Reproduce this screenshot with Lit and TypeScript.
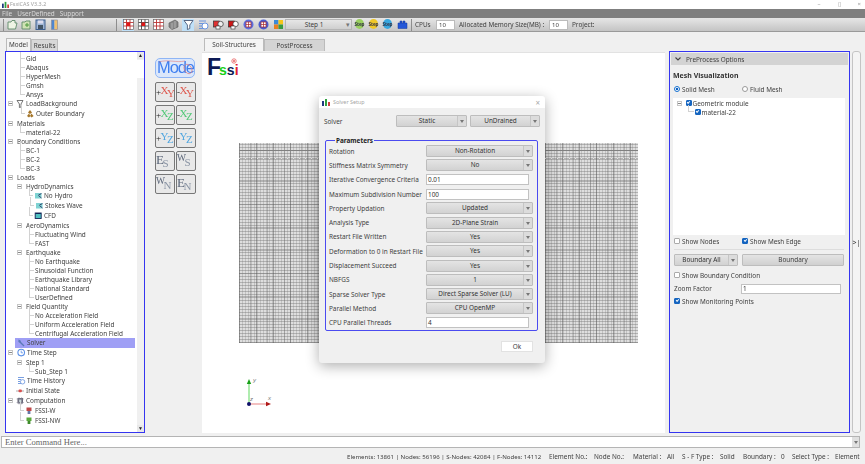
import { LitElement, html, css, svg } from "lit";
import { customElement } from "lit/decorators.js";

type Row = { t: string; x: number; h?: number; ic?: string; exp?: number; stub?: boolean; sel?: boolean };
const R = (t: string, x: number, o: Partial<Row> = {}): Row => ({ t, x, stub: true, ...o });

const treeRows: Row[] = [
  R("Gid", 26), R("Abaqus", 26), R("HyperMesh", 26), R("Gmsh", 26), R("Ansys", 26),
  R("LoadBackground", 26, { h: 10, ic: "funnel", exp: 11, stub: false }),
  R("Outer Boundary", 36, { h: 10, ic: "boundary" }),
  R("Materials", 17, { exp: 11, stub: false }), R("material-22", 26),
  R("Boundary Conditions", 17, { exp: 11, stub: false }), R("BC-1", 26), R("BC-2", 26), R("BC-3", 26),
  R("Loads", 17, { exp: 11, stub: false }),
  R("HydroDynamics", 26, { exp: 20, stub: false }),
  R("No Hydro", 44, { h: 10, ic: "wave" }), R("Stokes Wave", 45, { h: 10, ic: "wave" }), R("CFD", 44, { h: 10, ic: "cfd" }),
  R("AeroDynamics", 26, { exp: 20, stub: false }), R("Fluctuating Wind", 35), R("FAST", 35),
  R("Earthquake", 26, { exp: 20, stub: false }), R("No Earthquake", 35), R("Sinusoidal Function", 35),
  R("Earthquake Library", 35), R("National Standard", 35), R("UserDefined", 35),
  R("Field Quantity", 26, { exp: 20, stub: false }), R("No Acceleration Field", 35),
  R("Uniform Acceleration Field", 35), R("Centrifugal Acceleration Field", 35),
  R("Solver", 27, { h: 10, ic: "wrench", sel: true, stub: false }),
  R("Time Step", 27, { h: 10, ic: "clock", exp: 11, stub: false }),
  R("Step 1", 26, { exp: 20, stub: false }), R("Sub_Step 1", 35),
  R("Time History", 27, { h: 10, ic: "history", stub: false }),
  R("Initial State", 26, { h: 10, ic: "state", stub: false }),
  R("Computation", 26, { h: 10, ic: "chip", exp: 11, stub: false }),
  R("FSSI-W", 35, { h: 10, ic: "fssiw" }), R("FSSI-NW", 35, { h: 10, ic: "fssinw" }),
];

const icons: Record<string, ReturnType<typeof svg>> = {
  funnel: svg`<path d="M1 1.5H7L5 5V8L3.4 8.6V5Z" fill="#fff" stroke="#555" stroke-width=".8"/>`,
  boundary: svg`<path d="M4 1 6 3.5 4 5 2 3.5ZM1 7 3 4.5 4.4 7 3 8.6ZM7.6 7 5.4 4.5 4 7 5.6 8.6Z" fill="#a5762a"/>`,
  wave: svg`<rect x="1" y="2" width="6.5" height="5.5" fill="#7fd3d3"/><path d="M4.5 4 7.5 2.6M4.5 4.6 7.5 7" stroke="#225" stroke-width=".8"/>`,
  cfd: svg`<rect x="1.2" y="2" width="6" height="5.5" fill="#4fc0c0" stroke="#125" stroke-width=".9"/><rect x="1.5" y="2" width="5.4" height="1" fill="#125"/>`,
  wrench: svg`<path d="M1.5 1.5 3.5 2.5 4 4 7.5 7.6 6.6 8.4 3 5 1.4 4Z" fill="#5a7ab8"/>`,
  clock: svg`<circle cx="4.2" cy="4.6" r="3.3" fill="#fff" stroke="#5a8fe8" stroke-width="1.1"/><path d="M4.2 2.6V4.8H6" fill="none" stroke="#5a8fe8" stroke-width=".8"/>`,
  history: svg`<path d="M1 1.5H7M1 3.5H4M1 5.5H3M1 7.5H4" stroke="#6a94de" stroke-width=".9"/><circle cx="5.6" cy="5.8" r="2.2" fill="#fff" stroke="#6a94de" stroke-width=".8"/>`,
  state: svg`<path d="M0 5H8" stroke="#999" stroke-width=".8"/><rect x="2.5" y="3.6" width="3.4" height="2.6" rx="1" fill="#d95050"/>`,
  chip: svg`<rect x="1.5" y="2" width="5.5" height="5.5" fill="#667" /><rect x="3" y="3.5" width="2.5" height="2.5" fill="#cdd"/><path d="M.5 3H8M.5 6.5H8M3 1V8.5M5.6 1V8.5" stroke="#889" stroke-width=".5"/>`,
  fssiw: svg`<rect x="1.5" y="1.5" width="5" height="3.5" fill="#c04848"/><rect x="2.6" y="5" width="2.8" height="3" fill="#6678a8"/>`,
  fssinw: svg`<rect x="1.5" y="1.5" width="5" height="3.5" fill="#5aa83c"/><rect x="2.6" y="5" width="2.8" height="3" fill="#3f8a2c"/>`,
};

const grid = (red: boolean, w = "#b33") => svg`<rect x=".5" y=".5" width="10" height="10" fill="#fff" stroke="#666" stroke-width=".7"/>
  <path d="M3.5 .5V10.500M7 .5V10.500M.5 3.500H10.500M.5 7H10.500" stroke="${w}" stroke-width=".9"/>
  ${red ? svg`<rect x="3.5" y="3.5" width="3.5" height="3.5" fill="#e01818"/>` : ""}`;
const bubble = (c1: string, c2: string) => svg`<rect x=".5" y="2" width="6" height="6" fill="${c1}" stroke="#333" stroke-width=".7"/><circle cx="7.6" cy="5" r="2.7" fill="${c2}" stroke="#333" stroke-width=".7"/><rect x="3" y="7" width="4" height="3" fill="#fff" stroke="#333" stroke-width=".6"/>`;
const ball = (c: string) => svg`<circle cx="5.5" cy="5.5" r="5" fill="${c}"/><rect x="3" y="3" width="5" height="5" fill="#fff" stroke="#a22" stroke-width=".7"/><path d="M5.5 3V8M3 5.5H8" stroke="#a22" stroke-width=".7"/>`;

const leftTools = [
  svg`<path d="M1 3H4L5 1.5H8V4H10L8.5 10H1Z" fill="#eef4e4" stroke="#5f8a6a" stroke-width=".9"/>`,
  svg`<path d="M1 3H4L5 2H9V10H1Z" fill="#cfe3b4" stroke="#5f8a6a" stroke-width=".9"/><path d="M6 4V8M4 6H8" stroke="#4d9a3c"/>`,
  svg`<rect x="1" y="1" width="9" height="9.5" fill="#9fb5d6" stroke="#3e5f8e"/><rect x="3" y="1.5" width="5" height="3" fill="#dde"/><rect x="3" y="6" width="5" height="4" fill="#456"/>`,
  svg`<rect x="2.5" y="1" width="3" height="9.5" fill="#4f86cf"/><rect x="5.5" y="1" width="3" height="9.5" fill="#f0c070"/><rect x="2.5" y="1" width="6" height="9.5" fill="none" stroke="#889" stroke-width=".6"/>`,
];

const stepIcon = (c: string) => html`<span class="step"><span class="disc" style="background:${c}"></span><span class="stx">Step</span></span>`;

const dlgRows: [string, string, boolean][] = [
  ["Rotation", "Non-Rotation", true],
  ["Stiffness Matrix Symmetry", "No", true],
  ["Iterative Convergence Criteria", "0.01", false],
  ["Maximum Subdivision Number", "100", false],
  ["Property Updation", "Updated", true],
  ["Analysis Type", "2D-Plane Strain", true],
  ["Restart File Written", "Yes", true],
  ["Deformation to 0 in Restart File", "Yes", true],
  ["Displacement Succeed", "Yes", true],
  ["NBFGS", "1", true],
  ["Sparse Solver Type", "Direct Sparse Solver (LU)", true],
  ["Parallel Method", "CPU OpenMP", true],
  ["CPU Parallel Threads", "4", false],
];

const views: [string, string, string, string][] = [
  ["+", "X", "Y", "xr"], ["-", "X", "Y", "xr"],
  ["+", "X", "Z", "xg"], ["-", "X", "Z", "xg"],
  ["+", "Y", "Z", "xb"], ["-", "Y", "Z", "xb"],
  ["", "E", "S", "xs"], ["", "W", "S", "xs w"],
  ["", "W", "N", "xs w"], ["", "E", "N", "xs"],
];

@customElement("app-root")
export class AppRoot extends LitElement {
  static styles = css`
    :host { display: block; width: 865px; height: 464px; overflow: hidden; background: #f0f0f0;
      font-family: "Noto Sans", "Open Sans", sans-serif; font-size: 6.4px; color: #404040; }
    * { box-sizing: border-box; }
    .app { width: 865px; height: 464px; display: flex; flex-direction: column; position: relative; filter: blur(0.38px); }
    .title { height: 9px; background: #fff; display: flex; align-items: center; padding: 0 0 0 2px; gap: 1px; color: #a0a0a0; font-size: 5.4px; line-height: 9px; flex: none; }
    .title .ctl { margin-left: auto; display: flex; gap: 17px; padding-right: 4px; color: #9a9a9a; font-size: 6px; }
    .menu { height: 9px; background: #7f7f7f; color: #d9d9d9; display: flex; gap: 5px; padding-left: 2px; line-height: 9px; flex: none; font-size: 6.4px; }
    .bar { height: 14px; flex: none; background: linear-gradient(#e6e6e6, #c4c4c4); border-bottom: 1px solid #9a9a9a; display: flex; align-items: center; position: relative; font-size: 6.4px; white-space: nowrap; }
    .bar svg { width: 11px; height: 11px; flex: none; display: block; }
    .grip { width: 1px; height: 12px; background: #8d8d8d; flex: none; }
    .ti { width: 12px; height: 12px; padding: .5px; flex: none; }
    .ti.on { background: #bfe0f8; }
    .leftt { display: flex; gap: 2px; margin-left: 2px; margin-right: 56px; }
    .grp { display: flex; gap: 3px; }
    .combo-step { width: 67px; height: 11px; background: linear-gradient(#e6e6e6,#cfcfcf); border: 1px solid #b5b5b5; text-align: center; line-height: 9px; position: relative; padding-right: 9px; margin-left: 1px; }
    .combo-step::after { content: "▾"; position: absolute; right: 1px; top: 0; color: #777; font-size: 7px; }
    .step { width: 11px; height: 10px; position: relative; flex: none; display: block; }
    .disc { position: absolute; inset: 0 1px; border-radius: 50%; display: block; }
    .stx { position: absolute; left: 0; right: 0; top: 0; font-size: 4.6px; font-weight: 700; line-height: 10px; text-align: center; color: #334; letter-spacing: -.1px; }
    .binp { height: 10px; width: 19px; background: #fff; border: 1px solid #bbb; line-height: 8px; padding-left: 2px; font-size: 6px; flex: none; }

    .main { flex: 1; min-height: 0; display: flex; }

    .left { width: 150px; flex: none; display: flex; flex-direction: column; padding: 6px 0 0 5px; }
    .tabs { display: flex; height: 13px; flex: none; padding-left: 1px; }
    .tab { background: #d8d8d8; border: 1px solid #bbb; border-bottom: 0; padding: 0 2px; line-height: 11px; height: 12px; margin-top: 1px; }
    .tab.on { background: #f4f4f4; height: 13px; margin-top: 0; }
    .tree { width: 140px; height: 382px; border: 1.5px solid #3535f0; background: #fff; position: relative; padding-top: 2px; overflow: hidden; }
    .row { position: relative; line-height: 9px; white-space: nowrap; }
    .row .stub { position: absolute; top: -4px; height: 8.5px; width: 5px; border-left: 1px solid #d2d2d2; border-bottom: 1px solid #d2d2d2; }
    .row .lab { position: absolute; top: 0; line-height: inherit; }
    .row.sel::before { content: ""; position: absolute; left: 9px; width: 120px; top: 0; bottom: 0; background: #9f9ff5; }
    .row svg { position: absolute; top: 0; width: 9px; height: 9px; }
    .row .ex { position: absolute; top: 2px; width: 5px; height: 5px; border: 1px solid #c6c6c6; background: #fff; }
    .row .ex::after { content: ""; position: absolute; left: 0; right: 0; top: 1px; height: 1px; background: #888; }
    .sb { position: absolute; right: 0; top: 0; bottom: 0; width: 7px; background: #f0f0f0; }
    .sb .th { position: absolute; left: 0; right: 0; top: 8px; height: 18px; background: #fff; }
    .sb .up, .sb .dn { position: absolute; left: 0; right: 0; height: 7px; background: #e8e8e8; color: #222; font-size: 5px; line-height: 7px; text-align: center; }
    .sb .up { top: 0; } .sb .dn { bottom: 0; }

    .center { flex: 1; min-width: 0; display: flex; flex-direction: column; padding-top: 6px; }
    .ctabs { display: flex; height: 14px; padding-left: 54px; flex: none; }
    .ctab { width: 61px; text-align: center; line-height: 11px; height: 12px; margin-top: 1px; background: #d4d4d4; border: 1px solid #bbb; border-bottom: 0; }
    .ctab.on { background: #f4f4f4; height: 13px; margin-top: 0; width: 60px; }
    .cbody { flex: 1; display: flex; min-height: 0; }
    .vt { width: 52px; flex: none; padding: 6px 0 0 5px; display: flex; flex-direction: column; gap: 4px; }
    .mode { width: 40px; height: 20px; border: 1.5px solid #8fb5f5; border-radius: 5px; background: #dbe7fb; color: #3f7ff0; font-size: 16.5px; line-height: 17px; text-align: left; padding-left: 1px; font-family: "Liberation Sans", sans-serif; letter-spacing: -1.1px; overflow: hidden; position: relative; }
    .mode svg { position: absolute; left: 0; top: 0; width: 37px; height: 17px; }
    .vg { display: grid; grid-template-columns: 20px 20px; grid-auto-rows: 20px; gap: 3px 1px; }
    .vb { border: 1.2px solid #777; border-radius: 2px; background: #e8e8e8; font-family: "Liberation Serif", serif; font-size: 9px; line-height: 17px; white-space: nowrap; overflow: hidden; color: #222; letter-spacing: -.5px; position: relative; padding-left: 0; }
    .vb i, .vb b { font-style: normal; font-weight: 400; display: inline-block; }
    .vb i { font-size: 11px; transform: translateY(-1.5px); }
    .vb b { font-size: 11px; transform: translateY(2px); margin-left: -1px; }
    .xr i, .xr b { color: #de5a50; } .xg i, .xg b { color: #52c878; } .xb i, .xb b { color: #50a6e0; }
    .xs i { color: #5a6578; font-size: 13px; } .xs b { color: #8a94a4; }
    .xs.w i { font-size: 9.500px; transform: translateY(-3px); }
    .canvas { flex: 1; background: #fff; position: relative; border-top: 1px solid #e2e2e2; }
    .logo { position: absolute; left: 5px; top: 3px; font-family: "Liberation Sans", sans-serif; font-weight: 700; line-height: 22px; white-space: nowrap; }
    .logo .f { font-size: 23px; color: #0c1a55; letter-spacing: -2px; }
    .logo .s1 { font-size: 14px; color: #18d018; } .logo .s2 { font-size: 14px; color: #0c1a55; } .logo .i { font-size: 14px; color: #e02030; }
    .logo svg { position: absolute; left: 24px; top: 2px; width: 6px; height: 6px; }
    .mesh { position: absolute; left: 37px; top: 90px; width: 399px; height: 200px;
      background-color: #dedede;
      background-image:
        repeating-linear-gradient(90deg, rgba(255,255,255,.7) 0 1px, transparent 1px 6px),
        linear-gradient(#808080, #808080),
        repeating-linear-gradient(90deg, rgba(80,80,80,.45) 0 1px, transparent 1px 11px, rgba(90,90,90,.3) 11px 12px, transparent 12px 17px),
        repeating-linear-gradient(90deg, rgba(120,120,120,.28) 0 1px, transparent 1px 3px),
        repeating-linear-gradient(0deg, rgba(100,100,100,.36) 0 1px, transparent 1px 3px),
        repeating-linear-gradient(0deg, rgba(70,70,70,.28) 0 1px, transparent 1px 23px);
      background-size: 100% 1px, 100% 1px, auto, auto, auto, auto;
      background-position: 0 15px, 0 7px, 0 0, 0 0, 0 0, 0 0;
      background-repeat: no-repeat, no-repeat, repeat, repeat, repeat, repeat;
    }
    .axes { position: absolute; left: 41px; top: 322px; width: 32px; height: 32px; overflow: visible; }

    .dlg { position: absolute; left: 319px; top: 96px; width: 226px; height: 267px; background: #f0f0f0; border-radius: 3px; box-shadow: 0 3px 14px rgba(0,0,0,.32); display: flex; flex-direction: column; }
    .dt { height: 12px; background: #fff; border-radius: 3px 3px 0 0; display: flex; align-items: center; padding: 0 5px 0 3px; color: #a5a5a5; font-size: 5.4px; flex: none; gap: 3px; }
    .dt .x { margin-left: auto; color: #aaa; font-size: 8px; }
    .dt svg { width: 8px; height: 8px; }
    .dsolver { display: flex; align-items: center; height: 12px; margin-top: 7px; padding-left: 5px; flex: none; }
    .dsolver .l { width: 72px; }
    .cb { height: 12px; background: linear-gradient(#e4e4e4,#d2d2d2); border: 1px solid #bdbdbd; border-radius: 1px; text-align: center; line-height: 10px; padding-right: 9px; position: relative; flex: none; color: #333; }
    .cb::after { content: ""; position: absolute; right: 0; top: 0; bottom: 0; width: 8px; border-left: 1px solid #c6c6c6; background: #dcdcdc; }
    .cb::before { content: ""; position: absolute; z-index: 1; right: 2px; top: 4px; border: 2px solid transparent; border-top: 3px solid #777; border-bottom: 0; }
    .group { margin: 13px 0 0 6px; width: 213px; height: 191px; border: 1px solid #4b4bf0; border-radius: 2px; position: relative; padding: 3px 0 0 3px; flex: none; }
    .gt { position: absolute; left: 9px; top: -5px; background: #f0f0f0; font-weight: 700; padding: 0 1px; line-height: 9px; color: #222; }
    .drow { height: 14.3px; display: flex; align-items: center; }
    .drow .l { width: 97px; flex: none; white-space: nowrap; }
    .inp { width: 103px; height: 11px; background: #fff; border: 1px solid #c2c2c2; line-height: 9px; padding-left: 1px; color: #333; }
    .ok { align-self: flex-end; margin: 10px 12px 0 0; width: 32px; height: 11px; background: #fff; border: 1px solid #e2e2e2; text-align: center; line-height: 9px; }

    .right { width: 200px; flex: none; display: flex; gap: 2px; padding-top: 19px; padding-left: 4px; }
    .panel { width: 181px; height: 382px; border: 1.5px solid #3535f0; padding: 1px; display: flex; flex-direction: column; flex: none; }
    .ph { height: 12px; background: #d3d3d3; display: flex; align-items: center; gap: 5px; padding-left: 4px; flex: none; }
    .ph svg { width: 6px; height: 6px; }
    .pb { padding: 0 1px 0 1px; display: flex; flex-direction: column; flex: 1; }
    .h { font-weight: 700; font-size: 7px; margin: 5px 0 0 1px; line-height: 11px; color: #333; }
    .radios { display: flex; margin: 3.5px 0 0 2px; height: 9px; align-items: center; }
    .rd { display: flex; align-items: center; gap: 2px; }
    .rd i { width: 6px; height: 6px; border-radius: 50%; border: 1px solid #999; background: #fff; display: block; flex: none; }
    .rd.on i { border: 1.5px solid #1470d0; background: radial-gradient(#0d5fc0 0 1.2px, #fff 1.6px); }
    .ptree { height: 137px; background: #fff; margin: 4px 2px 0 1px; position: relative; padding-top: 1px; }
    .ptr { height: 9px; display: flex; align-items: center; gap: 1px; line-height: 9px; position: relative; }
    .pex { position: absolute; left: 4px; top: 2px; width: 5px; height: 5px; border: 1px solid #c6c6c6; background: #fff; }
    .pex::after { content: ""; position: absolute; left: 0; right: 0; top: 1px; height: 1px; background: #888; }
    .pst { position: absolute; left: 15px; top: -3px; width: 6px; height: 7px; border-left: 1px solid #d2d2d2; border-bottom: 1px solid #d2d2d2; }
    .chk { width: 6px; height: 6px; border: 1px solid #aaa; background: #fff; display: block; flex: none; border-radius: 1px; }
    .chk.on { background: #1565c0; border-color: #1565c0; position: relative; }
    .chk.on::after { content: ""; position: absolute; left: .8px; top: .2px; width: 2.2px; height: 1.2px; border-left: .7px solid #fff; border-bottom: .7px solid #fff; transform: rotate(-45deg); }
    .ckr { display: flex; align-items: center; gap: 2px; height: 9px; white-space: nowrap; }
    .two { display: flex; margin: 2px 0 0 2px; }
    .sep { height: 1px; background: #ddd; margin: 3px 3px 0 2px; flex: none; }
    .bnd { display: flex; gap: 4px; margin: 4px 0 0 2px; }
    .btn { width: 102px; height: 12px; background: linear-gradient(#e4e4e4,#d0d0d0); border: 1px solid #bdbdbd; border-radius: 1px; text-align: center; line-height: 10px; }
    .zoomr { display: flex; align-items: center; margin: 3px 0 0 2px; height: 12px; }
    .zoomr .l { width: 67px; }
    .zoomr .inp { width: 100px; height: 10px; line-height: 8px; }
    .strip { width: 9px; height: 382px; border: 1px solid #c4c4c4; border-radius: 3px; background: #f4f4f4; flex: none; display: flex; align-items: center; justify-content: center; font-size: 7px; color: #333; white-space: nowrap; }

    .cmd { height: 12px; margin: 3px 5px 0 1px; background: #fff; border: 1px solid #b4b4b4; font-family: "Liberation Serif", serif; font-size: 8.6px; line-height: 10px; padding-left: 3px; color: #666; position: relative; flex: none; width: 859px; }
    .cmd span { position: absolute; right: 0; top: 0; bottom: 0; width: 7px; background: #e0e0e0; }
    .cmd span::after { content: ""; position: absolute; left: 2px; top: 4px; border: 2px solid transparent; border-top: 3px solid #777; border-bottom: 0; }
    .status { height: 16px; flex: none; display: flex; align-items: center; padding-left: 347px; font-size: 6.4px; white-space: nowrap; }
    .status span { display: block; flex: none; }
    .status .tot { width: 202px; font-size: 6.1px; }
  `;

  private tree() {
    return treeRows.map((r) => {
      const h = r.h ?? 9;
      return html`<div class="row ${r.sel ? "sel" : ""}" style="height:${h}px">
        ${r.exp ? html`<span class="ex" style="left:${r.exp - 9}px"></span>` : ""}
        ${r.stub ? html`<span class="stub" style="left:${(r.ic ? r.x - 9 : r.x) - 12}px;width:${r.ic ? 4 : 5}px"></span>` : ""}
        ${r.ic ? html`<svg viewBox="0 0 9 9" style="left:${r.x - 16}px">${icons[r.ic]}</svg>` : ""}
        <span class="lab" style="left:${r.x - 6}px">${r.t}</span>
      </div>`;
    });
  }

  render() {
    const t = (s: ReturnType<typeof svg>, on = false) =>
      html`<span class="ti ${on ? "on" : ""}"><svg viewBox="0 0 11 11">${s}</svg></span>`;
    return html`<div class="app">
      <div class="title">
        <svg viewBox="0 0 8 8" width="7" height="7"><rect x="0" y="3" width="2" height="5" fill="#223a80"/><rect x="3" y="1" width="2" height="7" fill="#30a040"/><rect x="6" y="4" width="2" height="4" fill="#d04040"/></svg>
        <span>FsxiCAS V3.3.2</span>
        <span class="ctl"><span>–</span><span>▯</span><span>×</span></span>
      </div>
      <div class="menu"><span>File</span><span>UserDefined</span><span>Support</span></div>
      <div class="bar">
        <span class="grip" style="margin-left:3px"></span>
        <div class="leftt">${leftTools.map((s) => t(s))}</div>
        <span class="grip"></span>
        <div class="grp" style="margin-left:5px">
          ${t(grid(true), true)}${t(grid(true, "#444"))}${t(grid(false))}
          ${t(svg`<path d="M1 4 7 1 10 3V8L4 10.5 1 8Z" fill="#888" stroke="#555" stroke-width=".6"/><path d="M4 4V10M7 2V9" stroke="#ccc" stroke-width=".6"/>`)}
          ${t(svg`<path d="M1 1.5H10L6.8 6V9.5L4.4 10.5V6Z" fill="#fff" stroke="#4a5a78" stroke-width=".9"/>`, true)}
          ${t(svg`<path d="M1 2H8M1 4.5H5M1 7H4M1 9.5H5" stroke="#6a94de"/><circle cx="7" cy="7" r="3" fill="#fff" stroke="#6a94de"/>`)}
          ${t(bubble("#e03030", "#f0f0f0"))}${t(bubble("#d01818", "#fff"))}${t(ball("#5b6fe0"))}${t(ball("#4a5cd0"))}
          ${t(svg`<rect x="1" y="1" width="4.5" height="4.5" fill="#3a8ad8"/><rect x="5.5" y="1" width="4.5" height="4.5" fill="#f5c518"/><rect x="1" y="5.5" width="4.5" height="4.5" fill="#e88020"/><rect x="5.5" y="5.5" width="4.5" height="4.5" fill="#3a9a40"/>`)}
        </div>
        <div class="combo-step">Step 1</div>
        <div class="grp" style="margin-left:2px">
          ${stepIcon("#9ad060")}${stepIcon("#f0c828")}${stepIcon("#38a8e0")}
          <span class="ti"><svg viewBox="0 0 11 11"><path d="M1 4H10V9.5H1ZM3 4V2H5V4M6 4V2H8V4" fill="#2457d8" stroke="#123a9e" stroke-width=".5"/></svg></span>
        </div>
        <span class="grip" style="margin-left:3px;margin-right:3px"></span>
        <span style="width:21px">CPUs</span><span class="binp">10</span>
        <span style="margin-left:4px;width:90px">Allocated Memory Size(MB) :</span><span class="binp">10</span>
        <span style="margin-left:4px">Project:</span>
      </div>
      <div class="main">
        <div class="left">
          <div class="tabs"><span class="tab on">Model</span><span class="tab">Results</span></div>
          <div class="tree">
            ${this.tree()}
            <div class="sb"><div class="up">▲</div><div class="th"></div><div class="dn">▼</div></div>
          </div>
        </div>
        <div class="center">
          <div class="ctabs"><span class="ctab on">Soil-Structures</span><span class="ctab">PostProcess</span></div>
          <div class="cbody">
            <div class="vt">
              <div class="mode">Mode<svg viewBox="0 0 37 17"><path d="M3 3C12 0 20 4 29 2" fill="none" stroke="#e08080" stroke-width=".6"/><ellipse cx="32" cy="10" rx="3.600" ry="5" transform="rotate(-30 32 10)" fill="none" stroke="#e08080" stroke-width=".7"/></svg></div>
              <div class="vg">
                ${views.map(([s, a, b, c]) => html`<div class="vb ${c}">${s}<i>${a}</i><b>${b}</b></div>`)}
              </div>
            </div>
            <div class="canvas">
              <div class="logo"><span class="f">F</span><span class="s1">s</span><span class="s2">s</span><span class="i">i</span><svg viewBox="0 0 6 6"><circle cx="3" cy="3" r="2.200" fill="none" stroke="#e86060" stroke-width=".8"/><circle cx="3" cy="3" r="1" fill="#e86060"/></svg></div>
              <div class="mesh"></div>
              <svg class="axes" viewBox="0 0 32 32">
                <path d="M6 29V6" stroke="#9be89b" stroke-width="1.6"/><path d="M3.8 9 6 4 8.2 9Z" fill="#18a018"/>
                <path d="M6 29H26" stroke="#f0b0b0" stroke-width="1.6"/><path d="M23 26.8 28 29 23 31.2Z" fill="#b01818"/>
                <circle cx="6" cy="29" r="2" fill="#10106a"/>
                <text x="10" y="7" font-size="6" fill="#777" font-style="italic" font-family="Liberation Sans">y</text>
                <text x="7" y="26" font-size="6" fill="#777" font-style="italic" font-family="Liberation Sans">z</text>
                <text x="25" y="25" font-size="6" fill="#777" font-style="italic" font-family="Liberation Sans">x</text>
              </svg>
            </div>
          </div>
        </div>
        <div class="right">
          <div class="panel">
            <div class="ph"><svg viewBox="0 0 6 6"><path d="M.5 1.5 3 4 5.500 1.500" fill="none" stroke="#444" stroke-width="1.100"/></svg><span>PreProcess Options</span></div>
            <div class="pb">
              <div class="h">Mesh Visualization</div>
              <div class="radios"><span class="rd on" style="width:68px"><i></i>Solid Mesh</span><span class="rd"><i></i>Fluid Mesh</span></div>
              <div class="ptree">
                <div class="ptr" style="padding-left:12.5px"><span class="pex"></span><span class="chk on"></span>Geometric module</div>
                <div class="ptr" style="padding-left:21.5px"><span class="pst"></span><span class="chk on"></span>material-22</div>
              </div>
              <div class="two">
                <label class="ckr" style="width:68px"><span class="chk"></span>Show Nodes</label>
                <label class="ckr"><span class="chk on"></span>Show Mesh Edge</label>
              </div>
              <div class="sep"></div>
              <div class="bnd"><div class="cb" style="width:64px">Boundary All</div><div class="btn">Boundary</div></div>
              <label class="ckr" style="margin:5px 0 0 2px"><span class="chk"></span>Show Boundary Condition</label>
              <div class="zoomr"><span class="l">Zoom Factor</span><span class="inp">1</span></div>
              <label class="ckr" style="margin:2px 0 0 2px"><span class="chk on"></span>Show Monitoring Points</label>
            </div>
          </div>
          <div class="strip">&gt;|</div>
        </div>
      </div>
      <div class="cmd">Enter Command Here...<span></span></div>
      <div class="status">
        <span class="tot">Elements: 13861 | Nodes: 56196 | S-Nodes: 42084 | F-Nodes: 14112</span>
        <span style="width:45px">Element No.:</span><span style="width:39px">Node No.:</span>
        <span style="width:34px">Material :</span><span style="width:15px">All</span>
        <span style="width:38px">S - F Type :</span><span style="width:23px">Solid</span>
        <span style="width:38px">Boundary :</span><span style="width:11px">0</span>
        <span style="width:43px">Select Type :</span><span>Element</span>
      </div>
      <div class="dlg">
        <div class="dt"><svg viewBox="0 0 8 8"><rect x="0" y="3" width="2" height="5" fill="#223a80"/><rect x="3" y="1" width="2" height="7" fill="#30a040"/><rect x="6" y="4" width="2" height="4" fill="#d04040"/></svg><span>Solver Setup</span><span class="x">×</span></div>
        <div class="dsolver"><span class="l">Solver</span><div class="cb" style="width:71px">Static</div><div class="cb" style="width:70px;margin-left:3px">UnDrained</div></div>
        <div class="group">
          <span class="gt">Parameters</span>
          ${dlgRows.map(([l, v, c]) => html`<div class="drow"><span class="l">${l}</span>${c ? html`<div class="cb" style="width:107px">${v}</div>` : html`<div class="inp">${v}</div>`}</div>`)}
        </div>
        <div class="ok">Ok</div>
      </div>
    </div>`;
  }
}
